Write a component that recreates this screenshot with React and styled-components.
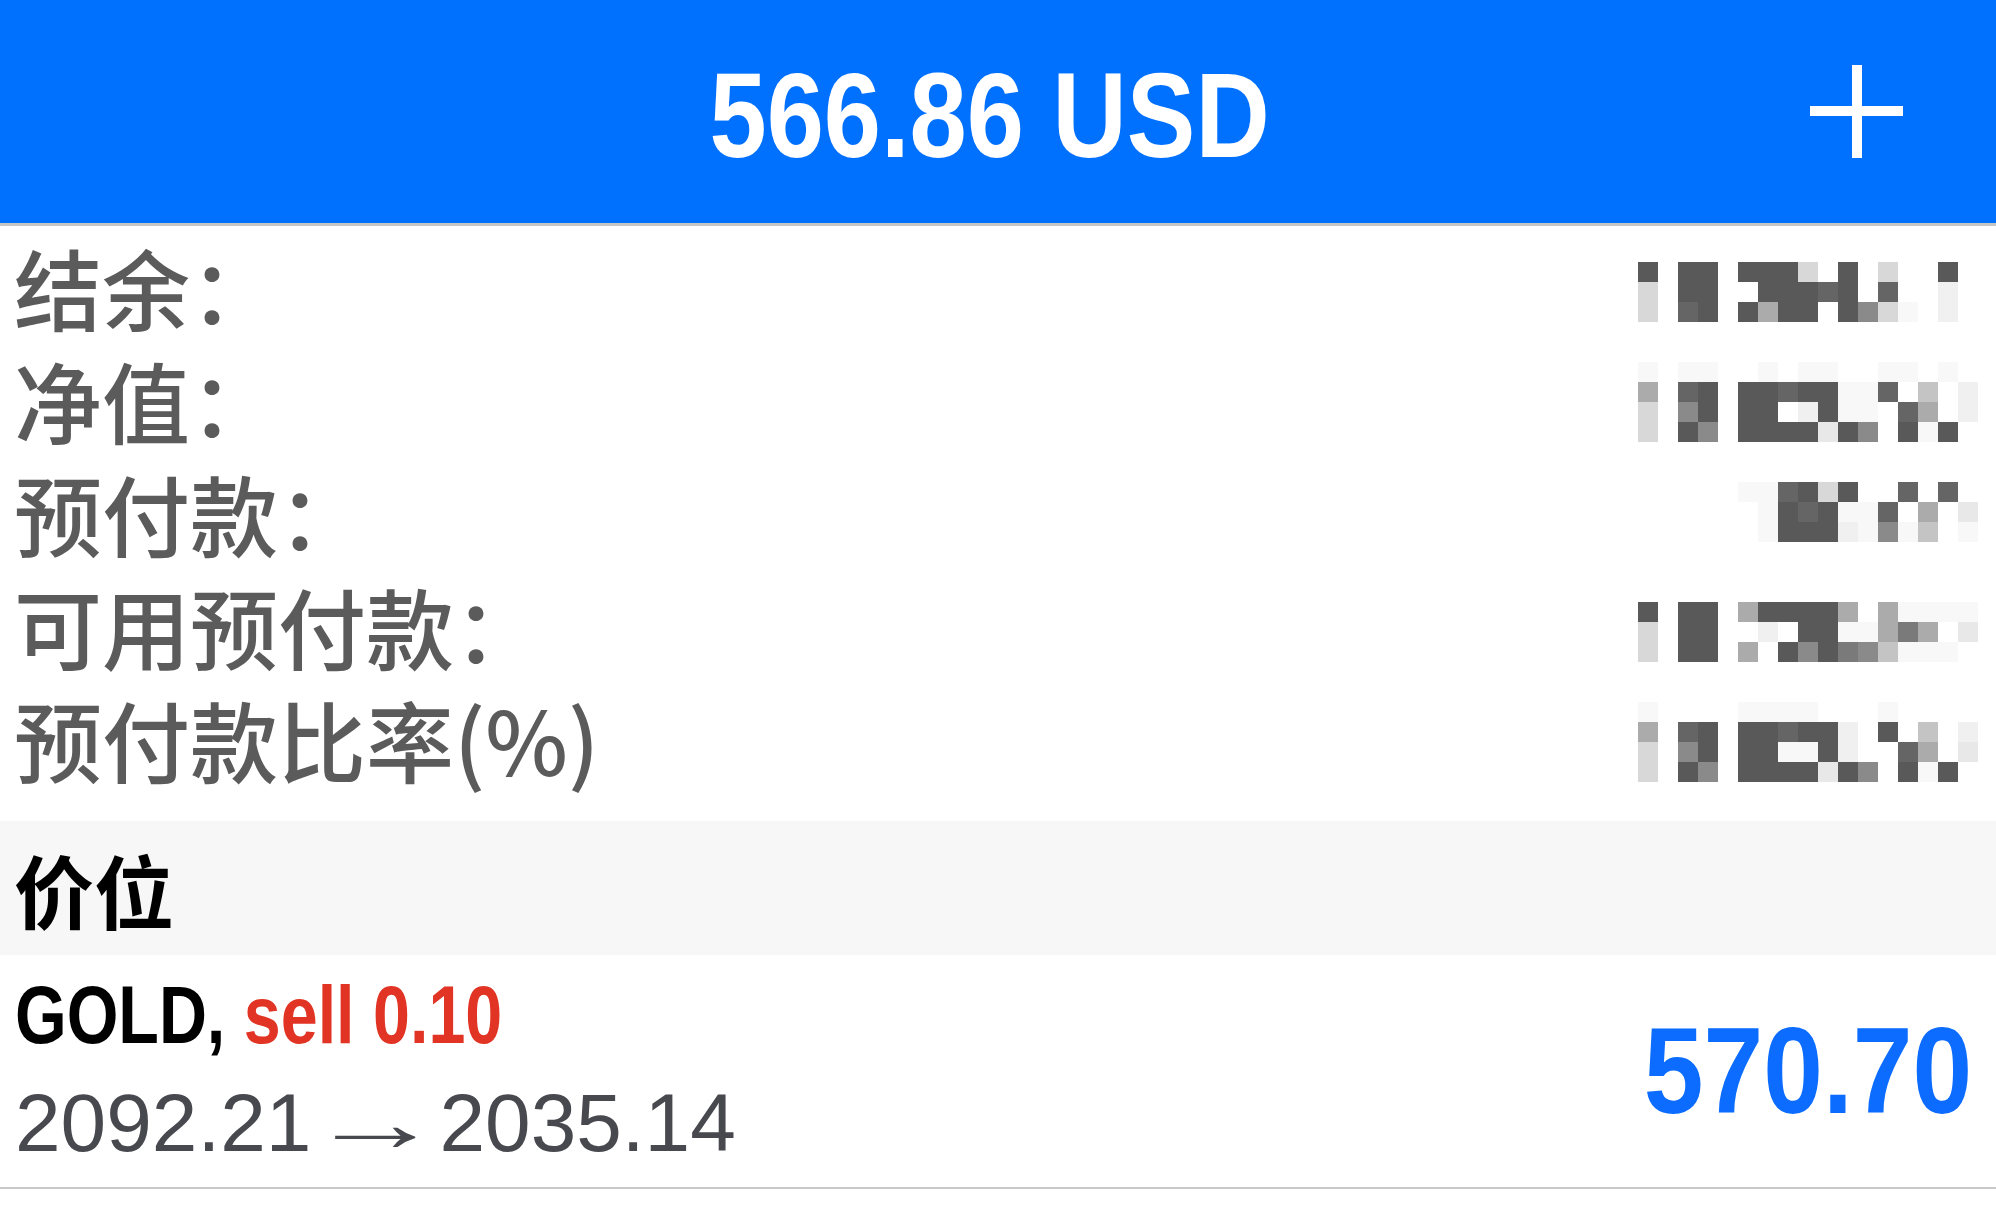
import React from "react";
import styled, { createGlobalStyle } from "styled-components";

const GlobalStyle = createGlobalStyle`
  html, body {
    margin: 0;
    padding: 0;
    background: #fff;
  }
  body {
    font-family: "Liberation Sans", Arial, sans-serif;
  }
`;

const cjk = `"Noto Sans CJK SC", "Liberation Sans", sans-serif`;

const Screen = styled.div`
  width: 100%;
  min-height: 1230px;
  background: #fff;
`;

const Header = styled.header`
  box-sizing: border-box;
  height: 226px;
  background: #0070ff;
  border-bottom: 3px solid #c6c6c6;
  display: grid;
  grid-template-columns: 1fr auto 1fr;
  align-items: center;
`;

const Balance = styled.h1`
  grid-column: 2;
  margin: 0 16px 0 0;
  padding-top: 7px;
  color: #fff;
  font-size: 121px;
  font-weight: 700;
  line-height: 1;
  white-space: nowrap;
  transform: scaleX(0.85);
`;

const AddButton = styled.button`
  grid-column: 3;
  justify-self: end;
  margin-right: 93px;
  width: 93px;
  height: 93px;
  padding: 0;
  border: none;
  background: none;
  display: flex;
`;

const Summary = styled.section`
  padding: 3px 18px 27px 14px;
`;

const SummaryRow = styled.div`
  display: flex;
  justify-content: space-between;
  align-items: flex-start;
  height: 113px;
`;

const Label = styled.span`
  font-family: ${cjk};
  font-size: 88px;
  font-weight: 500;
  line-height: 113px;
  color: #5b5b5b;
  white-space: nowrap;
`;

const MosaicBox = styled.svg`
  display: block;
  flex: none;
  margin-top: ${(p) => p.$offset}px;
  shape-rendering: crispEdges;
`;

const SectionBand = styled.div`
  box-sizing: border-box;
  height: 134px;
  background: #f7f7f7;
  display: flex;
  align-items: center;
  padding-left: 14px;
  font-family: ${cjk};
  font-size: 80px;
  font-weight: 700;
  line-height: 1;
  color: #000;
`;

const PositionRow = styled.div`
  box-sizing: border-box;
  height: 234px;
  border-bottom: 2px solid #c8c8c8;
  display: flex;
  justify-content: space-between;
  align-items: center;
  padding: 0 24px 0 15px;
`;

const PositionInfo = styled.div`
  align-self: flex-start;
  padding-top: 8px;
`;

const SymbolLine = styled.div`
  font-size: 81px;
  font-weight: 700;
  line-height: 104px;
  color: #000;
  white-space: nowrap;
  transform: scaleX(0.82);
  transform-origin: left center;
`;

const Side = styled.span`
  color: #e23424;
`;

const PriceLine = styled.div`
  margin-top: 4px;
  font-size: 82px;
  line-height: 104px;
  color: #48484f;
  white-space: nowrap;
`;

const Arrow = styled.span`
  display: inline-block;
  width: 128px;
  text-align: center;
`;

const ArrowGlyph = styled.span`
  display: inline-block;
  transform: scaleX(1.65);
`;

const Profit = styled.div`
  font-size: 122px;
  font-weight: 700;
  line-height: 1;
  color: #0b6cff;
  white-space: nowrap;
  transform: scaleX(0.88);
  transform-origin: right center;
`;

// pixelated (censored) values, one char per 20px cell
const shades = {
  D: "#595959",
  d: "#656565",
  M: "#7a7a7a",
  m: "#8a8a8a",
  g: "#ababab",
  s: "#c4c4c4",
  l: "#d8d8d8",
  e: "#e8e8e8",
  f: "#f0f0f0",
  w: "#f8f8f8",
};

const CELL = 20;

const Mosaic = ({ rows, offset }) => (
  <MosaicBox $offset={offset} width={CELL * 17} height={CELL * rows.length}>
    {rows.map((row, r) =>
      row.split("").map((c, i) =>
        shades[c] ? (
          <rect
            key={`${r}-${i}`}
            x={i * CELL}
            y={r * CELL}
            width={CELL}
            height={CELL}
            fill={shades[c]}
          />
        ) : null
      )
    )}
  </MosaicBox>
);

const summary = [
  {
    label: "结余：",
    offset: 33,
    rows: ["D.DD.DDDl.D.l..D.", "l.DD..DDDdD.d..f.", "l.dD.DgDD.Dmlw.f."],
  },
  {
    label: "净值：",
    offset: 20,
    rows: [
      "w.ww..w.ww..ww.w.",
      "g.dD.DDdDDwwd.s.f",
      "l.mD.DD.fDww.dg.f",
      "l.Dm.DDDDeDm.DwD.",
    ],
  },
  {
    label: "预付款：",
    offset: 27,
    rows: [".....wwdDlD..d.d.", "......wDdDwwd.g.e", "......wDDDfwmws.w"],
  },
  {
    label: "可用预付款：",
    offset: 34,
    rows: ["D.DD.gDDDDg.gwwww", "l.DD..f.DDwwgMg.e", "l.DD.g.DmDMmswww."],
  },
  {
    label: "预付款比率(%)",
    offset: 21,
    rows: [
      "w....wwww...w....",
      "g.dD.DDdDDf.D.s.f",
      "l.mD.DDwwDf..dg.e",
      "l.Dm.DDDDeDm.DwD.",
    ],
  },
];

const PlusIcon = () => (
  <svg width="93" height="93" viewBox="0 0 93 93">
    <rect x="42" y="0" width="10" height="93" fill="#fff" />
    <rect x="0" y="41" width="93" height="10" fill="#fff" />
  </svg>
);

export default function App() {
  return (
    <Screen>
      <GlobalStyle />
      <Header>
        <Balance>566.86 USD</Balance>
        <AddButton aria-label="add">
          <PlusIcon />
        </AddButton>
      </Header>

      <Summary>
        {summary.map((item) => (
          <SummaryRow key={item.label}>
            <Label>{item.label}</Label>
            <Mosaic rows={item.rows} offset={item.offset} />
          </SummaryRow>
        ))}
      </Summary>

      <SectionBand>价位</SectionBand>

      <PositionRow>
        <PositionInfo>
          <SymbolLine>
            GOLD, <Side>sell 0.10</Side>
          </SymbolLine>
          <PriceLine>
            2092.21
            <Arrow>
              <ArrowGlyph>→</ArrowGlyph>
            </Arrow>
            2035.14
          </PriceLine>
        </PositionInfo>
        <Profit>570.70</Profit>
      </PositionRow>
    </Screen>
  );
}
